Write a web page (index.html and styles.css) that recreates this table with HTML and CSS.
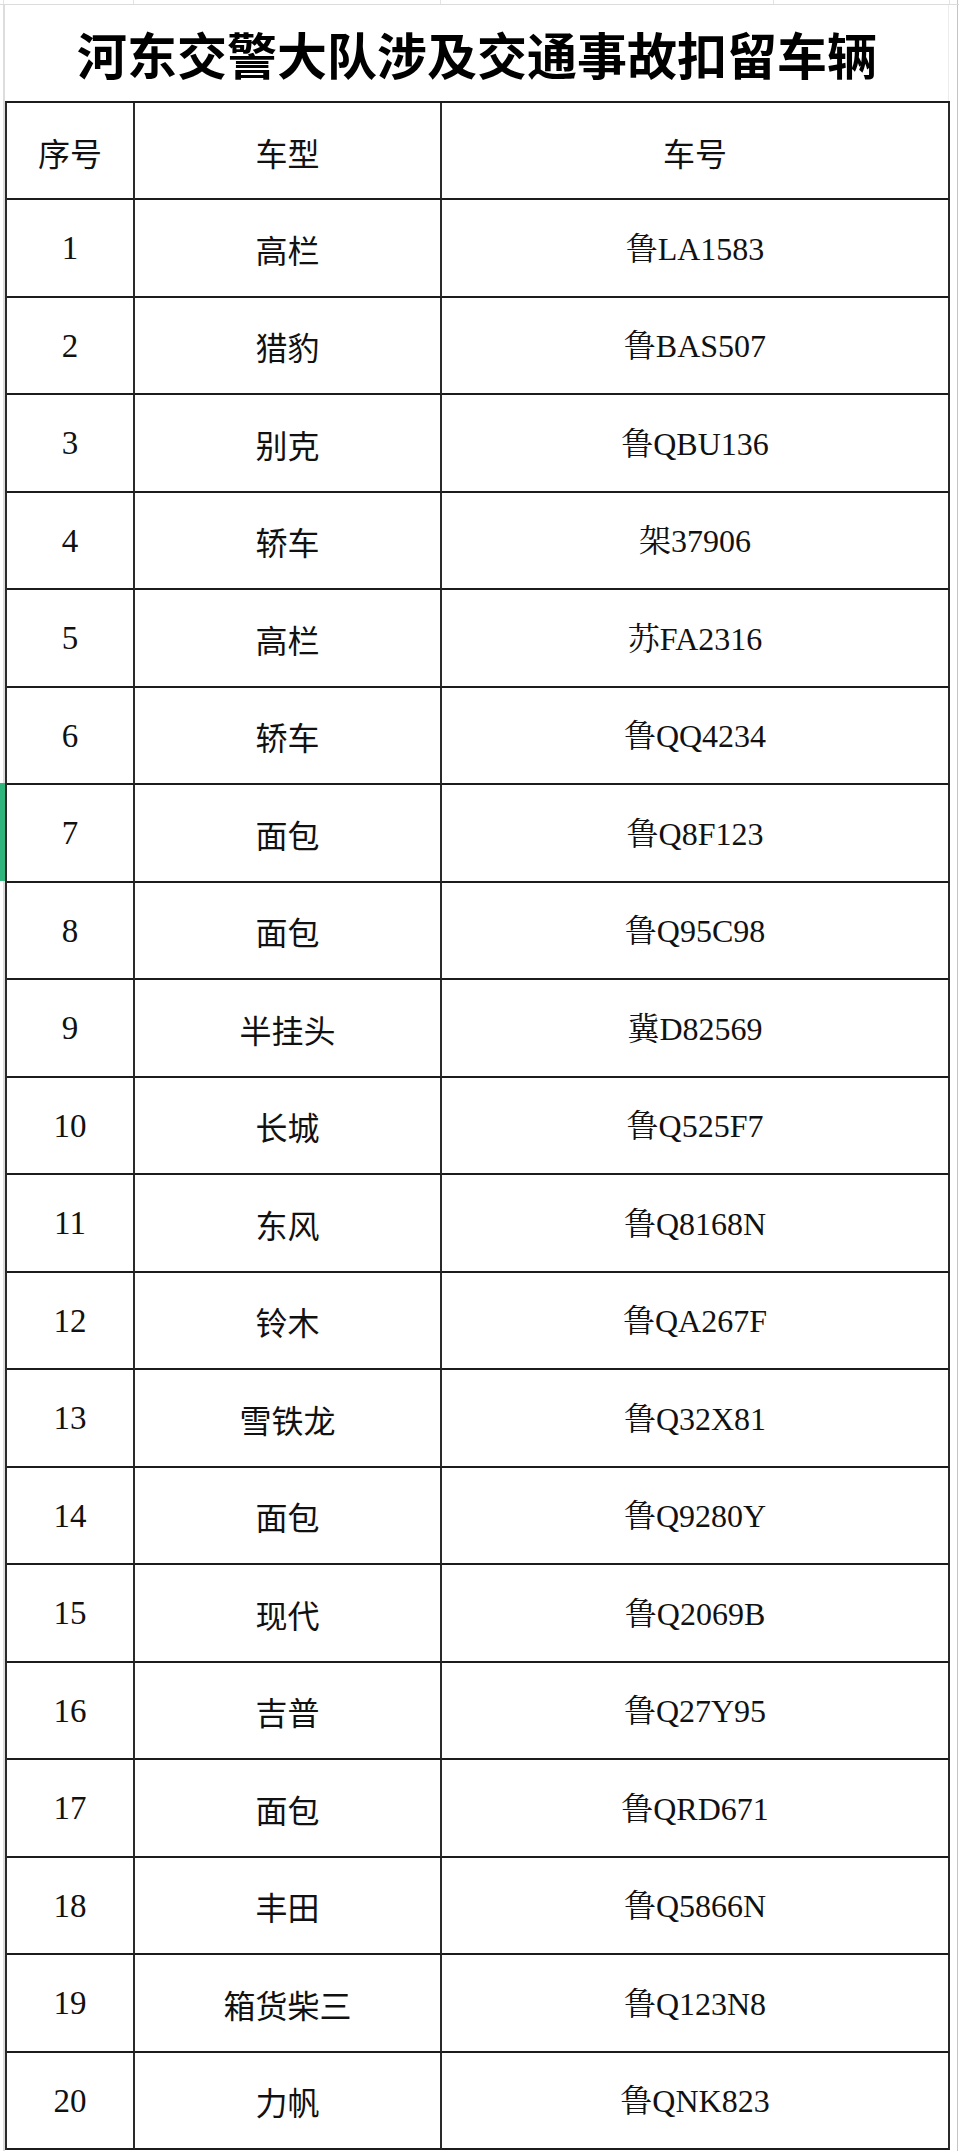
FILE: index.html
```html
<!DOCTYPE html>
<html lang="zh-CN">
<head>
<meta charset="utf-8">
<title>河东交警大队涉及交通事故扣留车辆</title>
<link rel="stylesheet" href="styles.css">
</head>
<body>
<div class="topstrip">
  <span class="ts ts1"></span><span class="ts ts2"></span><span class="ts ts3"></span><span class="ts ts4"></span><span class="ts ts5"></span><span class="ts ts6"></span><span class="ts ts7"></span>
</div>
<div class="page">
  <div class="gutter-left"><div class="sel"></div></div>
  <div class="main">
    <div class="title">河东交警大队涉及交通事故扣留车辆</div>
    <div class="grid">
      <div class="cell head">序号</div><div class="cell head">车型</div><div class="cell head">车号</div>
      <div class="cell num">1</div><div class="cell type">高栏</div><div class="cell plate">鲁LA1583</div>
      <div class="cell num">2</div><div class="cell type">猎豹</div><div class="cell plate">鲁BAS507</div>
      <div class="cell num">3</div><div class="cell type">别克</div><div class="cell plate">鲁QBU136</div>
      <div class="cell num">4</div><div class="cell type">轿车</div><div class="cell plate">架37906</div>
      <div class="cell num">5</div><div class="cell type">高栏</div><div class="cell plate">苏FA2316</div>
      <div class="cell num">6</div><div class="cell type">轿车</div><div class="cell plate">鲁QQ4234</div>
      <div class="cell num">7</div><div class="cell type">面包</div><div class="cell plate">鲁Q8F123</div>
      <div class="cell num">8</div><div class="cell type">面包</div><div class="cell plate">鲁Q95C98</div>
      <div class="cell num">9</div><div class="cell type">半挂头</div><div class="cell plate">冀D82569</div>
      <div class="cell num">10</div><div class="cell type">长城</div><div class="cell plate">鲁Q525F7</div>
      <div class="cell num">11</div><div class="cell type">东风</div><div class="cell plate">鲁Q8168N</div>
      <div class="cell num">12</div><div class="cell type">铃木</div><div class="cell plate">鲁QA267F</div>
      <div class="cell num">13</div><div class="cell type">雪铁龙</div><div class="cell plate">鲁Q32X81</div>
      <div class="cell num">14</div><div class="cell type">面包</div><div class="cell plate">鲁Q9280Y</div>
      <div class="cell num">15</div><div class="cell type">现代</div><div class="cell plate">鲁Q2069B</div>
      <div class="cell num">16</div><div class="cell type">吉普</div><div class="cell plate">鲁Q27Y95</div>
      <div class="cell num">17</div><div class="cell type">面包</div><div class="cell plate">鲁QRD671</div>
      <div class="cell num">18</div><div class="cell type">丰田</div><div class="cell plate">鲁Q5866N</div>
      <div class="cell num">19</div><div class="cell type">箱货柴三</div><div class="cell plate">鲁Q123N8</div>
      <div class="cell num">20</div><div class="cell type">力帆</div><div class="cell plate">鲁QNK823</div>
    </div>
  </div>
  <div class="gutter-right"></div>
</div>
</body>
</html>
```
FILE: styles.css
```css
html, body {
  margin: 0;
  padding: 0;
  background: #ffffff;
}
body {
  width: 959px;
  height: 2151px;
  overflow: hidden;
  font-family: "Noto Sans CJK SC", "Noto Sans", sans-serif;
  color: #000;
}
.topstrip {
  display: flex;
  height: 4px;
  border-bottom: 1px solid #dcdcdc;
}
.ts {
  display: block;
  height: 4px;
  border-right: 1px solid #e4e4e4;
}
.ts1 { width: 3px; }
.ts2 { width: 129px; }
.ts3 { width: 306px; }
.ts4 { width: 332px; }
.ts5 { width: 175px; }
.ts6 { width: 7px; border-right-color: #c8c8c8; }
.ts7 { flex: 1; border-right: none; }

.page {
  display: flex;
  align-items: stretch;
  height: 2146px;
}
.gutter-left {
  position: relative;
  width: 3px;
  border-right: 2px solid #dddddd;
  flex: none;
}
.sel {
  position: absolute;
  left: 0;
  top: 778px;
  width: 5px;
  height: 98px;
  background: #2fb47c;
}
.main {
  width: 945px;
  flex: none;
}
.gutter-right {
  width: 7px;
  border-right: 1px solid #c4c4c4;
  flex: none;
}
.title {
  height: 96px;
  width: 944px;
  border-right: 1px solid #ececec;
  box-sizing: border-box;
  display: flex;
  align-items: center;
  justify-content: center;
  font-family: "Noto Sans CJK SC", sans-serif;
  font-weight: 700;
  font-size: 50px;
  letter-spacing: 0;
  padding-left: 1px;
}
.grid {
  display: grid;
  grid-template-columns: 128px 307px 508px;
  grid-template-rows: 97px;
  grid-auto-rows: 97.5px;
  border-top: 2px solid #1c1c1c;
  border-left: 2px solid #2a2a2a;
}
.cell {
  box-sizing: border-box;
  border-right: 2px solid #2a2a2a;
  border-bottom: 2px solid #1c1c1c;
  display: flex;
  align-items: center;
  justify-content: center;
  font-size: 32px;
  line-height: 1;
  color: #111;
}
.head {
  font-family: "Noto Sans CJK SC", sans-serif;
  padding-top: 2px;
}
.type {
  font-family: "Noto Sans CJK SC", sans-serif;
  padding-top: 2px;
}
.num {
  font-family: "Liberation Serif", "Noto Serif CJK SC", "Noto Sans CJK SC", serif;
  font-size: 33px;
  padding-top: 2px;
}
.plate {
  font-family: "Liberation Serif", "Noto Serif CJK SC", "Noto Sans CJK SC", serif;
  font-size: 32px;
  padding-top: 2px;
}
```
